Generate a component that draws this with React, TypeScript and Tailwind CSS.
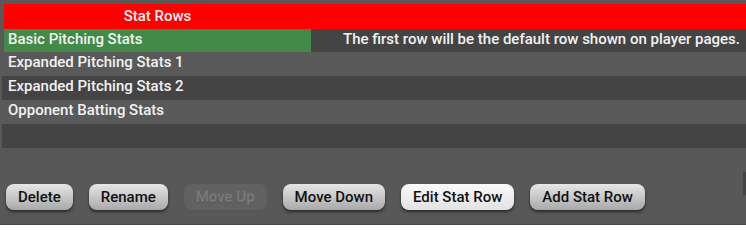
const rows = [
  { name: 'Expanded Pitching Stats 1', dark: false },
  { name: 'Expanded Pitching Stats 2', dark: true },
  { name: 'Opponent Batting Stats', dark: false },
  { name: '', dark: true },
];

function Btn({ label, disabled, active }: { label: string; disabled?: boolean; active?: boolean }) {
  if (disabled) {
    return (
      <button className="h-[26px] px-[12px] rounded-[8px] bg-[#616161] text-[#7a7a7a] text-[15px] font-medium [text-shadow:0_1px_0_#555,0_-1px_0_#6a6a6a]">
        {label}
      </button>
    );
  }
  return (
    <button
      className={
        'h-[26px] px-[12px] rounded-[8px] text-[15px] font-medium text-[#111] shadow-[0_2px_3px_rgba(0,0,0,0.55)] ' +
        (active
          ? 'bg-[linear-gradient(#fafafa,#e2e2e2)]'
          : 'bg-[linear-gradient(#e6e6e6,#a9a9a9)]')
      }
    >
      {label}
    </button>
  );
}

export default function App() {
  return (
    <div className="w-[746px] h-[225px] bg-[#585858] font-['Roboto',sans-serif] text-[15px] text-[#f2f2f2] flex flex-col relative overflow-hidden">
      <div className="pt-[4px] pl-[4px]">
        <div className="h-[25px] bg-[#ff0000] flex items-center">
          <div className="w-[307px] text-center font-medium">Stat Rows</div>
        </div>
        <div className="h-[23px] flex bg-[#444444]">
          <div className="w-[307px] bg-[#438a48] pl-[4px] leading-[20px] font-medium">Basic Pitching Stats</div>
          <div className="flex-1 text-right pr-[6px] leading-[20px] font-medium">
            The first row will be the default row shown on player pages.
          </div>
        </div>
      </div>
      <div className="pl-[2px]">
        {rows.map((r, i) => (
          <div
            key={i}
            className={'h-[24px] pl-[6px] leading-[20px] font-medium ' + (r.dark ? 'bg-[#444444]' : 'bg-[#595959]')}
          >
            {r.name}
          </div>
        ))}
      </div>
      <div className="flex gap-[16px] pl-[6px] mt-[36px]">
        <Btn label="Delete" />
        <Btn label="Rename" />
        <Btn label="Move Up" disabled />
        <Btn label="Move Down" />
        <Btn label="Edit Stat Row" active />
        <Btn label="Add Stat Row" />
      </div>
      <div className="absolute right-0 top-[172px] w-[3px] h-[23px] bg-[#444]" />
      <div className="absolute left-0 right-0 bottom-0 h-[1px] bg-[#4a4a4a]" />
    </div>
  );
}
